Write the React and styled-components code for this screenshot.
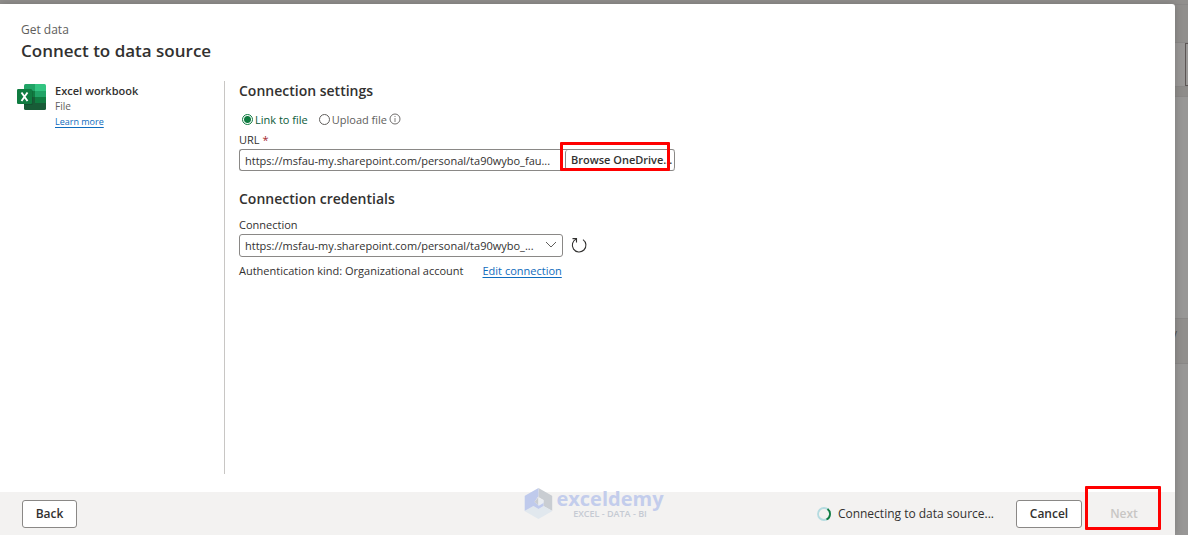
import React, { useState } from 'react';
import styled, { createGlobalStyle } from 'styled-components';

const GlobalStyle = createGlobalStyle`
  * {
    box-sizing: border-box;
  }

  body {
    margin: 0;
    font-family: 'Open Sans', 'Noto Sans', sans-serif;
    font-size: 11px;
    color: #323130;
    background: #989796;
  }

  button, input, select {
    font-family: inherit;
    color: inherit;
  }
`;

const Page = styled.div`
  position: relative;
  display: flex;
  min-height: 100vh;
  padding-top: 4px;
  background: #918f8d;
  overflow: hidden;
`;

const Dialog = styled.main`
  flex: 1;
  min-width: 0;
  display: flex;
  flex-direction: column;
  background: #ffffff;
  border-top-right-radius: 3px;
  box-shadow: 0 0 8px rgba(0, 0, 0, 0.2);
  z-index: 1;
`;

const Backdrop = styled.div`
  width: 13px;
  display: flex;
  flex-direction: column;
  font-size: 12px;
  line-height: 30px;
  color: #555453;
`;

const Strip = styled.div`
  height: ${(p) => p.$height || 'auto'};
  flex: ${(p) => (p.$height ? 'none' : 1)};
  background: ${(p) => p.$color};
  border-top: 1px solid #8a8887;
  text-indent: -4px;
`;

const EdgeBox = styled.div`
  height: 43px;
  margin-left: 10px;
  border: 1px solid #5c5655;
  border-right: none;
`;

const Header = styled.header`
  padding: 16px 21px 0;
`;

const Crumb = styled.div`
  font-size: 12px;
  line-height: 20px;
  color: #605e5c;
`;

const Title = styled.h1`
  margin: 0;
  font-size: 17px;
  line-height: 22px;
  font-weight: 600;
`;

const Body = styled.div`
  flex: 1;
  display: flex;
  padding: 19px 0 18px;
`;

const Source = styled.aside`
  width: 225px;
  display: flex;
  align-items: flex-start;
  gap: 9px;
  padding: 3px 0 0 17px;
  border-right: 1px solid #c8c6c4;
`;

const SourceText = styled.div`
  display: flex;
  flex-direction: column;
  align-items: flex-start;
  font-size: 10px;
  line-height: 16px;
  color: #605e5c;

  strong {
    font-size: 11px;
    line-height: 14px;
    font-weight: 600;
    color: #323130;
  }
`;

const Link = styled.a`
  color: #0f6cbd;
  font-size: ${(p) => (p.$small ? '9px' : '11px')};
  text-underline-offset: 2px;
`;

const Settings = styled.section`
  flex: 1;
  padding-left: 14px;
`;

const SectionTitle = styled.h2`
  margin: 0;
  font-size: 14px;
  line-height: 20px;
  font-weight: 600;
`;

const RadioRow = styled.div`
  display: flex;
  align-items: center;
  gap: 11px;
  height: 20px;
  margin: 8px 0 3px;
  padding-left: 3px;
`;

const RadioLabel = styled.label`
  display: flex;
  align-items: center;
  gap: 2px;
  font-size: 11px;
  color: ${(p) => (p.$checked ? '#0b5a39' : '#605e5c')};
`;

const Radio = styled.input`
  appearance: none;
  width: 11px;
  height: 11px;
  margin: 0;
  border: 1px solid #605e5c;
  border-radius: 50%;

  &:checked {
    border-color: #107c41;
    background: radial-gradient(circle, #107c41 3px, #ffffff 4px);
  }
`;

const InfoButton = styled.button`
  display: flex;
  margin-left: -9px;
  padding: 0;
  border: none;
  background: none;
`;

const FieldLabel = styled.label`
  display: block;
  font-size: 11px;
  line-height: 16px;
  margin-bottom: 1px;

  span {
    color: #a4262c;
  }
`;

const UrlRow = styled.div`
  display: flex;
  max-width: 436px;
`;

const UrlInput = styled.input`
  flex: 1;
  min-width: 0;
  height: 22px;
  padding: 0 5px;
  font-size: 11px;
  text-overflow: ellipsis;
  border: 1px solid #8a8886;
  border-right: none;
  border-radius: 3px 0 0 3px;
`;

const BrowseWrap = styled.div`
  position: relative;
  display: flex;
  padding-left: 5px;
  border: solid #8a8886;
  border-width: 1px 0;
  border-radius: 0 3px 3px 0;
`;

const BrowseButton = styled.button`
  width: 110px;
  height: 20px;
  padding: 0 5px 2px;
  font-size: 11px;
  font-weight: 600;
  text-align: left;
  white-space: nowrap;
  background: #ffffff;
  border: solid #8a8886;
  border-width: 0 1px;
  border-radius: 3px;
`;

const Highlight = styled.span`
  position: absolute;
  inset: ${(p) => p.$inset};
  border: 3px solid #ff0000;
  border-radius: 1px;
  pointer-events: none;
`;

const ConnectionRow = styled.div`
  display: flex;
  align-items: center;
  gap: 8px;
`;

const SelectWrap = styled.div`
  position: relative;
  flex: 0 1 324px;

  svg {
    position: absolute;
    right: 6px;
    top: 7px;
    pointer-events: none;
  }
`;

const Select = styled.select`
  appearance: none;
  display: block;
  width: 100%;
  height: 23px;
  padding: 0 24px 0 5px;
  font-size: 11px;
  background: #ffffff;
  border: 1px solid #8a8886;
  border-radius: 3px;
`;

const IconButton = styled.button`
  display: flex;
  padding: 0;
  border: none;
  background: none;
`;

const AuthRow = styled.div`
  display: flex;
  gap: 19px;
  margin-top: 6px;
  font-size: 11px;
  line-height: 16px;
`;

const Credentials = styled.div`
  margin-top: 18px;

  label {
    margin: 8px 0 1px;
  }
`;

const Footer = styled.footer`
  display: flex;
  align-items: center;
  gap: 9px;
  height: 43px;
  padding: 0 18px 0 22px;
  background: #f3f2f1;
`;

const Button = styled.button`
  width: ${(p) => p.$width};
  height: 28px;
  padding: 0;
  font-size: 12px;
  font-weight: 600;
  background: #ffffff;
  border: 1px solid #8a8886;
  border-radius: 3px;

  &:disabled {
    color: #c8c6c4;
    background: #f3f2f1;
    border-color: #f3f2f1;
  }
`;

const Status = styled.div`
  display: flex;
  align-items: center;
  gap: 7px;
  margin-left: auto;
  margin-right: 13px;
  font-size: 12px;
`;

const NextWrap = styled.div`
  position: relative;
`;

const Watermark = styled.div`
  position: absolute;
  left: 50%;
  bottom: 16px;
  transform: translateX(-50%);
  display: flex;
  align-items: center;
  gap: 4px;
  z-index: 2;
  pointer-events: none;
`;

const Brand = styled.div`
  font-size: 20px;
  line-height: 20px;
  font-weight: 700;
  color: #c3cdec;
`;

const Tagline = styled.div`
  font-size: 9px;
  line-height: 10px;
  font-weight: 600;
  text-align: center;
  color: #c5cad3;
`;

const ExcelIcon = () => (
  <svg width="29" height="26" viewBox="0 0 29 26" aria-hidden="true">
    <path d="M8.500 0H18v7H7V1.500A1.500 1.500 0 0 1 8.500 0z" fill="#21a366" />
    <path d="M18 0h9.500A1.500 1.500 0 0 1 29 1.500V7H18z" fill="#33c481" />
    <path d="M7 7h11v6H7z" fill="#107c41" />
    <path d="M18 7h11v6H18z" fill="#21a366" />
    <path d="M7 13h11v6H7z" fill="#185c37" />
    <path d="M18 13h11v6H18z" fill="#107c41" />
    <path d="M7 19h22v5.500a1.500 1.500 0 0 1-1.500 1.500h-19A1.500 1.500 0 0 1 7 24.500z" fill="#185c37" />
    <path d="M7 6h8.500v15H7z" fill="#0b4527" opacity="0.5" />
    <rect y="5" width="15" height="15" rx="1.200" fill="#107c41" />
    <path d="M4.500 8.500l6 8.500M10.500 8.500l-6 8.500" stroke="#fff" strokeWidth="1.900" />
  </svg>
);

const InfoIcon = () => (
  <svg width="12" height="12" viewBox="0 0 12 12" fill="none" stroke="#605e5c">
    <circle cx="6" cy="6" r="5" strokeWidth="0.900" />
    <path d="M6 5v4M6 3v1" strokeWidth="0.800" />
  </svg>
);

const ChevronIcon = () => (
  <svg width="12" height="8" viewBox="0 0 12 8" fill="none" stroke="#605e5c" aria-hidden="true">
    <path d="M1 1l5 5 5-5" />
  </svg>
);

const RefreshIcon = () => (
  <svg width="16" height="16" viewBox="0 1 16 16" fill="none" stroke="#323130" strokeWidth="1.100">
    <path d="M5.300 2A6.800 6.800 0 1 0 12 2.600" />
    <path d="M1.500 1.600h4v4" />
  </svg>
);

const Spinner = () => (
  <svg width="14" height="14" viewBox="0 0 14 14" fill="none" strokeWidth="1.800" aria-hidden="true">
    <circle cx="7" cy="7" r="6" stroke="#b4dbe0" />
    <path d="M10.500 2.100A6 6 0 0 1 9.500 12.450" stroke="#107c41" />
  </svg>
);

const BrandMark = () => (
  <svg width="28" height="31" viewBox="0 0 28 31" aria-hidden="true">
    <path d="M14 0l14 8v15l-9-5v-6l-5-3z" fill="#c9cdd2" />
    <path d="M0 23l9-5 5 3 5-3 9 5-14 8z" fill="#e1e8ee" />
    <path d="M14 0L0 8v15l9-5 5 3 5-3v-4l-5 3-4-3 4-6z" fill="#bfcaec" />
    <path d="M14 9l-4 5 4 3z" fill="#c9cdd2" />
    <path d="M14 10l5 2v3l-5 3z" fill="#e9edf2" />
  </svg>
);

const FILE_URL = 'https://msfau-my.sharepoint.com/personal/ta90wybo_fau...';

function App() {
  const [mode, setMode] = useState('link');
  const [url, setUrl] = useState(FILE_URL);

  return (
    <Page>
      <GlobalStyle />
      <Dialog>
        <Header>
          <Crumb>Get data</Crumb>
          <Title>Connect to data source</Title>
        </Header>

        <Body>
          <Source>
            <ExcelIcon />
            <SourceText>
              <strong>Excel workbook</strong>
              <span>File</span>
              <Link href="#learn" $small>Learn more</Link>
            </SourceText>
          </Source>

          <Settings>
            <SectionTitle>Connection settings</SectionTitle>
            <RadioRow>
              <RadioLabel $checked={mode === 'link'}>
                <Radio type="radio" name="mode" checked={mode === 'link'} onChange={() => setMode('link')} />
                Link to file
              </RadioLabel>
              <RadioLabel $checked={mode === 'upload'}>
                <Radio type="radio" name="mode" checked={mode === 'upload'} onChange={() => setMode('upload')} />
                Upload file
              </RadioLabel>
              <InfoButton aria-label="Info"><InfoIcon /></InfoButton>
            </RadioRow>

            <FieldLabel htmlFor="url">URL <span>*</span></FieldLabel>
            <UrlRow>
              <UrlInput id="url" value={url} onChange={(e) => setUrl(e.target.value)} />
              <BrowseWrap>
                <BrowseButton>Browse OneDrive...</BrowseButton>
                <Highlight $inset="-8px 5px -1px 0" />
              </BrowseWrap>
            </UrlRow>

            <Credentials>
              <SectionTitle>Connection credentials</SectionTitle>
              <FieldLabel htmlFor="connection">Connection</FieldLabel>
              <ConnectionRow>
                <SelectWrap>
                  <Select id="connection">
                    <option>https://msfau-my.sharepoint.com/personal/ta90wybo_...</option>
                  </Select>
                  <ChevronIcon />
                </SelectWrap>
                <IconButton aria-label="Refresh"><RefreshIcon /></IconButton>
              </ConnectionRow>
              <AuthRow>
                <span>Authentication kind: Organizational account</span>
                <Link href="#edit">Edit connection</Link>
              </AuthRow>
            </Credentials>
          </Settings>
        </Body>

        <Footer>
          <Button $width="55px">Back</Button>
          <Status role="status">
            <Spinner />
            Connecting to data source...
          </Status>
          <Button $width="66px">Cancel</Button>
          <NextWrap>
            <Button $width="66px" disabled>Next</Button>
            <Highlight $inset="-14px -4px -2px -6px" />
          </NextWrap>
        </Footer>
      </Dialog>

      <Backdrop aria-hidden="true">
        <Strip $height="38px" $color="#918f8d" />
        <Strip $height="44px" $color="#999796"><EdgeBox /></Strip>
        <Strip $height="10px" $color="#8e8c8a" />
        <Strip $height="222px" $color="#989796" />
        <Strip $height="45px" $color="#918f8d">y</Strip>
        <Strip $color="#989796" />
      </Backdrop>

      <Watermark>
        <BrandMark />
        <div>
          <Brand>exceldemy</Brand>
          <Tagline>EXCEL - DATA - BI</Tagline>
        </div>
      </Watermark>
    </Page>
  );
}

export default App;
